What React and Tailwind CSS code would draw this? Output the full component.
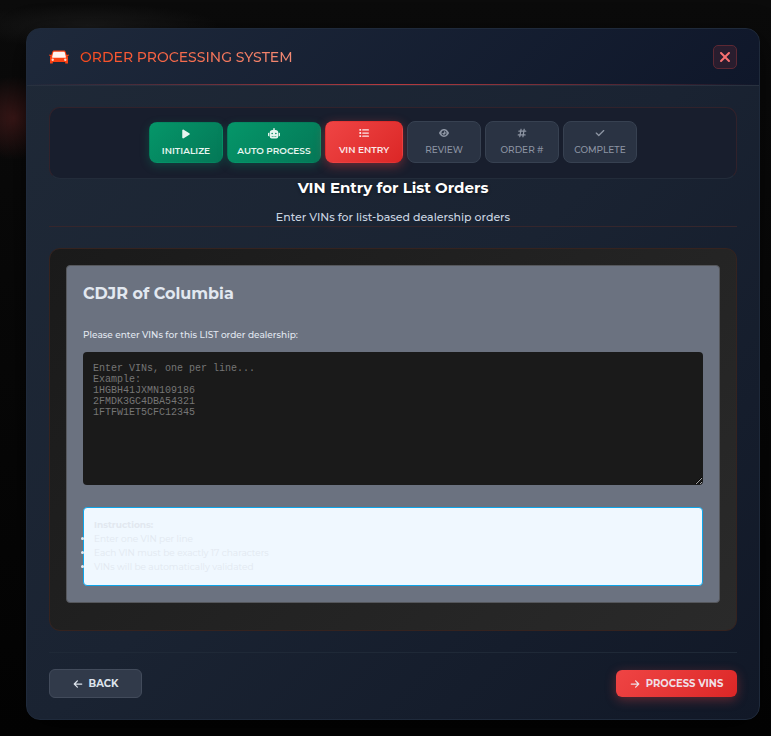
import React from "react";
import {
  FaPlay,
  FaList,
  FaEye,
  FaHashtag,
  FaCheck,
  FaArrowLeft,
  FaArrowRight,
  FaXmark,
} from "react-icons/fa6";

function Robot() {
  return (
    <svg viewBox="0 0 24 22" className="h-[11px] w-3" aria-hidden="true">
      <path
        fill="currentColor"
        fillRule="evenodd"
        d="M12 0a1.500 1.500 0 0 1 1.500 1.500V4H15a5.500 5.500 0 0 1 5.500 5.500V17a4 4 0 0 1-4 4h-9a4 4 0 0 1-4-4V9.500A5.500 5.500 0 0 1 9 4h1.500V1.500A1.500 1.500 0 0 1 12 0zM8.300 9.500a1.600 1.600 0 1 0 0 3.200 1.600 1.600 0 0 0 0-3.200zm7.400 0a1.600 1.600 0 1 0 0 3.200 1.600 1.600 0 0 0 0-3.200zM7.500 16v1.500h2V16zm3.500 0v1.500h2V16zm3.500 0v1.500h2V16zM1.500 9.500h1v7h-1A1.500 1.500 0 0 1 0 15v-4a1.500 1.500 0 0 1 1.500-1.500zm20 0h1A1.500 1.500 0 0 1 24 11v4a1.500 1.500 0 0 1-1.500 1.500h-1z"
      />
    </svg>
  );
}

const stepStyles = {
  done: "my-px h-[41px] border-transparent bg-linear-135 from-[#059669] to-[#047857] font-semibold text-[#e8f5f0] shadow-[0_3px_10px_rgba(5,150,105,0.3)]",
  active:
    "h-[42px] border-transparent bg-linear-135 from-[#ef4444] to-[#dc2626] font-semibold text-[#fbe9ea] shadow-[0_3px_11px_rgba(239,68,68,0.4)]",
  idle: "h-[42px] border-[#374151] bg-[#2a3343] font-medium text-[#8d95a3]",
};

const steps = [
  { label: "INITIALIZE", Icon: FaPlay, state: "done", width: "w-[74px]" },
  { label: "AUTO PROCESS", Icon: Robot, state: "done", width: "w-[94px]" },
  { label: "VIN ENTRY", Icon: FaList, state: "active", width: "w-[78px]" },
  { label: "REVIEW", Icon: FaEye, state: "idle", width: "w-[74px]" },
  { label: "ORDER #", Icon: FaHashtag, state: "idle", width: "w-[74px]" },
  { label: "COMPLETE", Icon: FaCheck, state: "idle", width: "w-[74px]" },
];

function Car() {
  return (
    <svg viewBox="0 0 20 14" className="h-[14px] w-5" aria-hidden="true">
      <path
        d="M5 0.5h10c.8 0 1.200.4 1.500 1.100L17.700 5l2-.5v1.200l-1.200.5c.3.4.5.9.5 1.500V13.500h-2.800V12H3.800v1.500H1V7.700c0-.6.2-1.100.5-1.500L.3 5.700V4.500l2 .5 1.200-3.400C3.800.9 4.200.5 5 .5z"
        fill="#fa4112"
      />
      <path
        d="M5 1.800h10c.4 0 .6.2.8.6l1.100 4.600c.1.5-.1.8-.6.8H3.700c-.5 0-.7-.3-.6-.8l1.100-4.600c.2-.4.4-.6.8-.6z"
        fill="#fff4ef"
      />
      <circle cx="3.700" cy="9.800" r="1.200" fill="#ffd9cc" />
      <circle cx="16.300" cy="9.800" r="1.200" fill="#ffd9cc" />
    </svg>
  );
}

function Header() {
  return (
    <header className="relative flex h-[57px] items-center justify-between rounded-t-[13px] border-b border-[#28313f] bg-linear-135 from-[#1e293b] to-[#0f172a] px-[22px]">
      <div className="flex items-center gap-[11px]">
        <Car />
        <h1 className="bg-linear-to-r from-[#f9481a] to-[#f28a74] bg-clip-text text-[14px] leading-5 font-medium text-transparent">
          ORDER PROCESSING SYSTEM
        </h1>
      </div>
      <button
        type="button"
        aria-label="Close"
        className="flex size-6 items-center justify-center rounded-[5px] border border-[#5d2833] bg-[#291d2e] text-[#f87171]"
      >
        <FaXmark size={16} />
      </button>
      <div className="absolute inset-x-0 bottom-0 h-px bg-[linear-gradient(90deg,rgba(239,68,68,0),rgba(239,68,68,0.75),rgba(239,68,68,0))]" />
    </header>
  );
}

function Stepper() {
  return (
    <nav className="flex justify-center gap-1 rounded-[11px] border border-[#31222b] border-b-[#232c3a] bg-[#181e2d] pt-[13px] pb-[14px]">
      {steps.map(({ label, Icon, state, width }) => (
        <button
          key={label}
          type="button"
          className={`flex flex-col items-center justify-center gap-[5px] rounded-lg border text-[9px] leading-[13px] whitespace-nowrap ${width} ${stepStyles[state]}`}
        >
          <Icon size={10} />
          {label}
        </button>
      ))}
    </nav>
  );
}

function VinCard() {
  return (
    <section className="mt-[21px] rounded-[11px] border border-[#35231f] bg-linear-135 from-[#1a1a1a] to-[#2a2a2a] px-4 pt-4 pb-[27px]">
      <div className="rounded-[4px] border border-[#55575c] bg-[#6b7280] p-4">
        <h3 className="text-base leading-6 font-bold text-[#e2e8f0]">CDJR of Columbia</h3>
        <label
          htmlFor="vins"
          className="mt-[21px] block text-[9px] leading-4 font-medium text-[#e2e8f0]"
        >
          Please enter VINs for this LIST order dealership:
        </label>
        <textarea
          id="vins"
          placeholder={
            "Enter VINs, one per line...\nExample:\n1HGBH41JXMN109186\n2FMDK3GC4DBA54321\n1FTFW1ET5CFC12345"
          }
          className="mt-[9px] block h-[133px] w-full resize-y rounded-[4px] bg-[#1a1a1a] px-[10px] py-[11px] font-['Courier_New','Liberation_Mono',monospace] text-[10px] leading-[11px] text-[#e2e8f0] placeholder:text-[#757575]"
        />
        <div className="mt-[22px] rounded-[4px] border border-[#0ea5e9] bg-[#f0f8ff] px-[10px] pt-[10px] pb-[11px] text-[9px] leading-[14px] text-[#e2e8f0]">
          <strong className="font-bold">Instructions:</strong>
          <ul className="list-disc">
            <li>Enter one VIN per line</li>
            <li>Each VIN must be exactly 17 characters</li>
            <li>VINs will be automatically validated</li>
          </ul>
        </div>
      </div>
    </section>
  );
}

export default function App() {
  return (
    <div className="min-h-screen bg-[radial-gradient(circle_at_14px_118px,#3a1717_0px,transparent_42px),radial-gradient(ellipse_130px_22px_at_90px_26px,#191919_0px,transparent_100%),linear-gradient(to_bottom,#0b0b0b,#030303)] pt-7 pr-[11px] pb-4 pl-[26px] font-[Montserrat,Inter,sans-serif]">
      <main className="rounded-[14px] border border-[#1f2a3b] bg-linear-135 from-[#1f2937] via-[#1a2332] to-[#111827] shadow-[0_10px_30px_rgba(0,0,0,0.6)]">
        <Header />
        <div className="px-[22px] pt-[21px] pb-[21px]">
          <Stepper />
          <div className="border-b border-[#35262c] pb-px text-center">
            <h2 className="text-[15px] leading-[18px] font-bold text-white [text-shadow:0_1px_3px_rgba(0,0,0,0.5)]">
              VIN Entry for List Orders
            </h2>
            <p className="mt-3 text-[11px] leading-4 font-medium text-[#cbd5e1]">
              Enter VINs for list-based dealership orders
            </p>
          </div>
          <VinCard />
          <footer className="mt-[21px] flex items-center justify-between border-t border-[#1f2937] pt-4">
            <button
              type="button"
              className="flex h-[29px] w-[93px] items-center justify-center gap-[6px] rounded-md border border-[#424b5b] bg-[#313a4a] text-[10px] font-bold text-[#dde3ec]"
            >
              <FaArrowLeft size={10} />
              BACK
            </button>
            <button
              type="button"
              className="flex h-[27px] w-[121px] items-center justify-center gap-[6px] rounded-md bg-linear-135 from-[#ef4444] to-[#dc2626] text-[10px] font-bold text-[#f0dfe6] shadow-[0_3px_11px_rgba(239,68,68,0.35)]"
            >
              <FaArrowRight size={10} />
              PROCESS VINS
            </button>
          </footer>
        </div>
      </main>
    </div>
  );
}
